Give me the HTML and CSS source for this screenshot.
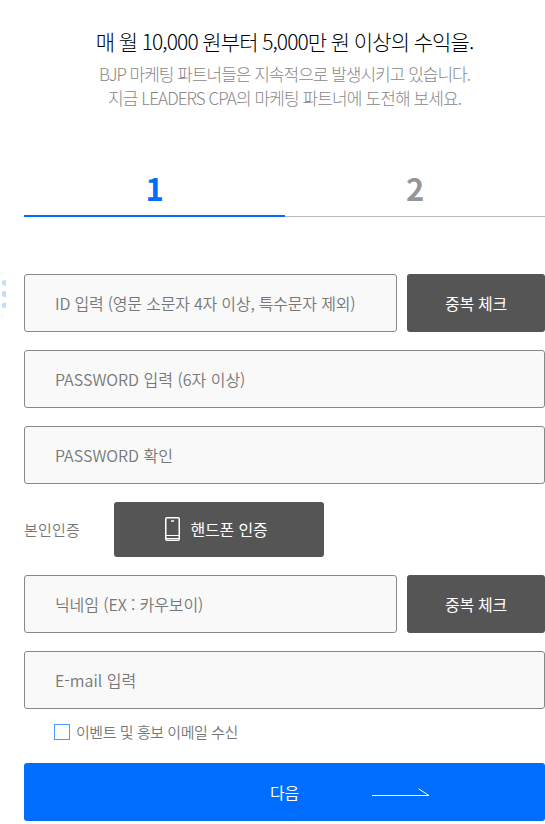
FILE: index.html
```html
<!DOCTYPE html>
<html lang="ko">
<head>
    <meta charset="UTF-8">
    <title>회원가입</title>
    <link rel="stylesheet" href="styles.css">
</head>
<body>
    <svg class="dots" width="6" height="48" viewBox="0 0 6 48" fill="#c4ddff">
        <circle cx="2.5" cy="2.5" r="1.2" fill="#eef5ff"/>
        <circle cx="4.6" cy="12.8" r="2.8"/>
        <circle cx="4.8" cy="24" r="3"/>
        <circle cx="4.6" cy="35.2" r="2.8"/>
        <circle cx="2.5" cy="45.5" r="1.2" fill="#eef5ff"/>
    </svg>
    <div class="join">
        <div class="intro">
            <div class="title">매 월 10,000 원부터 5,000만 원 이상의 수익을.</div>
            <div class="desc desc-first">BJP 마케팅 파트너들은 지속적으로 발생시키고 있습니다.</div>
            <div class="desc desc-second">지금 LEADERS CPA의 마케팅 파트너에 도전해 보세요.</div>
        </div>

        <div class="steps">
            <div class="step active">1</div>
            <div class="step">2</div>
        </div>

        <form class="form">
            <div class="row">
                <input class="field field-id" type="text" placeholder="ID 입력 (영문 소문자 4자 이상, 특수문자 제외)">
                <button class="btn btn-check" type="button">중복 체크</button>
            </div>
            <div class="row">
                <input class="field" type="password" placeholder="PASSWORD 입력 (6자 이상)">
            </div>
            <div class="row">
                <input class="field" type="password" placeholder="PASSWORD 확인">
            </div>
            <div class="row">
                <div class="row-label">본인인증</div>
                <button class="btn btn-phone" type="button">
                    <svg class="phone-icon" width="15" height="24" viewBox="0 0 15 24" fill="none" stroke="#fff">
                        <rect x="0.75" y="0.75" width="13.5" height="22.5" rx="1.2" stroke-width="1.5"/>
                        <path d="M1 18.5h13M1 21.5h13" stroke-width="1"/>
                        <path d="M6 4h3" stroke-width="1.5"/>
                    </svg>
                    <span>핸드폰 인증</span>
                </button>
            </div>
            <div class="row">
                <input class="field field-nick" type="text" placeholder="닉네임 (EX : 카우보이)">
                <button class="btn btn-check" type="button">중복 체크</button>
            </div>
            <div class="row">
                <input class="field" type="text" placeholder="E-mail 입력">
            </div>
            <label class="agree">
                <input class="agree-box" type="checkbox">
                <span>이벤트 및 홍보 이메일 수신</span>
            </label>
            <button class="btn btn-next" type="button">
                <span>다음</span>
                <svg class="arrow" width="58" height="9" viewBox="0 0 58 9" fill="none" stroke="#fff">
                    <path d="M0 7.5h57L46.5 0.8"/>
                </svg>
            </button>
        </form>
    </div>
</body>
</html>
```

FILE: styles.css
```css
* {
    box-sizing: border-box;
}
body {
    margin: 0;
    height: 824px;
    overflow: hidden;
    background: #fff;
    font-family: 'Noto Sans CJK KR', sans-serif;
    color: #777;
}
.dots {
    position: absolute;
    left: 0;
    top: 270px;
}
.join {
    padding: 28px 0 0 24px;
}
.intro {
    height: 130px;
    text-align: center;
}
.title {
    height: 34px;
    line-height: 26px;
    font-size: 21px;
    font-weight: 300;
    letter-spacing: -0.9px;
    word-spacing: -0.4px;
    color: #000;
}
.desc {
    height: 24px;
    line-height: 24px;
    font-size: 17px;
    font-weight: 300;
    letter-spacing: -1px;
    color: #888;
}
.desc-second {
    letter-spacing: -0.9px;
}
.steps {
    display: flex;
    height: 59px;
}
.step {
    flex: 1;
    padding: 10px 0 0 1px;
    line-height: 40px;
    font-size: 31px;
    font-weight: 700;
    text-align: center;
    color: #959595;
    border-bottom: 1px solid #bbb;
}
.step.active {
    color: #006dff;
    border-bottom: 2px solid #006dff;
}
.form {
    margin-top: 57px;
}
.row {
    display: flex;
    gap: 10px;
    margin-bottom: 18px;
}
.field {
    flex: 1;
    min-width: 0;
    height: 58px;
    padding: 0 30px;
    font-family: inherit;
    font-size: 16px;
    font-weight: 350;
    letter-spacing: 0;
    background: #f9f9f9;
    border: 1px solid #888;
    border-radius: 3px;
    outline: none;
}
.field-id {
    letter-spacing: -0.2px;
}
.field-nick {
    letter-spacing: -0.1px;
}
.field::placeholder {
    color: #777;
}
.btn {
    display: flex;
    align-items: center;
    justify-content: center;
    height: 58px;
    padding: 0;
    font-family: inherit;
    font-size: 16px;
    letter-spacing: -0.3px;
    color: #fff;
    background: #555;
    border: 0;
    border-radius: 3px;
}
.btn-check {
    width: 138px;
}
.row-label {
    width: 80px;
    line-height: 55px;
    font-size: 15px;
    font-weight: 350;
    letter-spacing: 0.2px;
}
.btn-phone {
    width: 210px;
    height: 55px;
    gap: 11px;
    padding: 0 6px 2px 0;
    letter-spacing: -0.2px;
}
.agree {
    display: flex;
    align-items: center;
    gap: 6px;
    height: 24px;
    margin: -7px 0 19px 30px;
    padding-bottom: 2px;
    font-size: 15px;
    font-weight: 350;
    letter-spacing: -0.45px;
}
.agree-box {
    appearance: none;
    width: 16px;
    height: 16px;
    margin: 2px 0 0;
    border: 1px solid #4c98ff;
    background: #fff;
}
.btn-next {
    position: relative;
    width: 100%;
    background: #006dff;
}
.arrow {
    position: absolute;
    left: 348px;
    top: 25px;
}
```
